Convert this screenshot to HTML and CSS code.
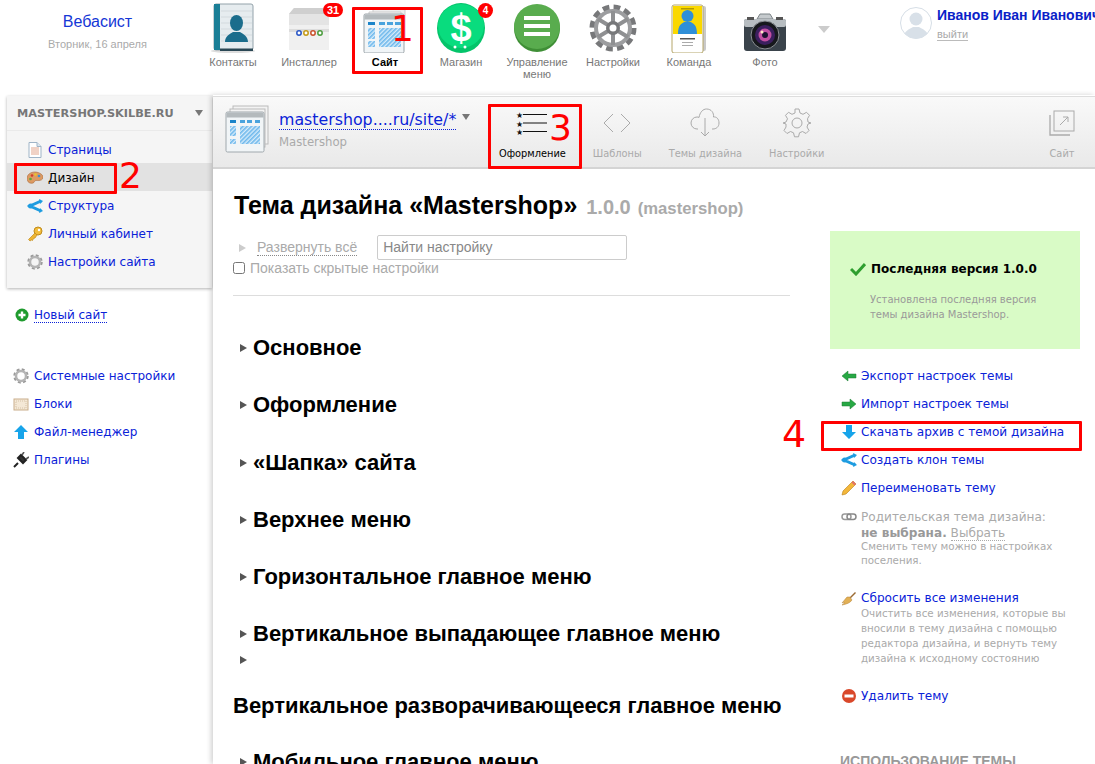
FILE: index.html
```html
<!DOCTYPE html>
<html lang="ru">
<head>
<meta charset="utf-8">
<title>Вебасист</title>
<link rel="stylesheet" href="styles.css">
</head>
<body>
<svg class="defs" width="0" height="0"><defs><pattern id="hatch" width="3" height="3" patternUnits="userSpaceOnUse" patternTransform="rotate(-45)"><rect width="3" height="3" fill="#d8ecfa"/><rect width="3" height="1.600" fill="#6db8ec"/></pattern></defs></svg>
<header class="top">
  <div class="brand">
    <a class="brand-name">Вебасист</a>
    <div class="brand-date">Вторник, 16 апреля</div>
  </div>
  <nav class="apps">
    <a class="app">
      <span class="app-icon"><svg width="46" height="50" viewBox="0 0 46 50"><ellipse cx="23" cy="48" rx="22" ry="2" fill="#ddd"/><rect x="4" y="1" width="39" height="46" rx="2" fill="#e6ecef" stroke="#93a2aa"/><rect x="4" y="1" width="6" height="46" fill="#1a7f97"/><path d="M10 45.500h33V48H10z" fill="#2a4754"/><g stroke="#d3dade"><path d="M11 8h31M11 14h31M11 20h31M11 26h31M11 32h31M11 38h31"/></g><ellipse cx="26.500" cy="20" rx="6.500" ry="8" fill="#1b6d8c"/><path d="M15 39c0-6 5-8 8-10h7c3 2 8 4 8 10z" fill="#1b6d8c"/></svg></span>
      <span class="app-label">Контакты</span>
    </a>
    <a class="app">
      <span class="app-icon"><svg width="46" height="50" viewBox="0 0 46 50"><path d="M8 5h32l3 6v36H3V11z" fill="#e4e4e4"/><path d="M3 11l5-6h32l3 6z" fill="#cfcfcf"/><path d="M3 22h40v25H3z" fill="#f0f0f0"/><path d="M3 26h40v3H3z" fill="#dcdcdc"/><circle cx="13" cy="30" r="2.200" fill="#fff" stroke="#2a56c6" stroke-width="1.500"/><circle cx="20" cy="30" r="2.200" fill="#fff" stroke="#c49a16" stroke-width="1.500"/><circle cx="27" cy="30" r="2.200" fill="#fff" stroke="#c9512c" stroke-width="1.500"/><circle cx="34" cy="30" r="2.200" fill="#fff" stroke="#4a9c3c" stroke-width="1.500"/></svg><b class="badge badge-wide">31</b></span>
      <span class="app-label">Инсталлер</span>
    </a>
    <a class="app app-active">
      <span class="app-icon"><svg width="48" height="50" viewBox="0 0 48 50"><path d="M12 6h32v32H12z" fill="#eee" stroke="#ccc"/><path d="M8 9h32v32H8z" fill="#f4f4f4" stroke="#ccc"/><rect x="3" y="11" width="40" height="39" rx="1.500" fill="#f1f5f7" stroke="#9aa3a8"/><rect x="3.500" y="11.500" width="39" height="5" fill="#b4babd"/><rect x="7" y="19" width="7" height="3" fill="#1b84c9"/><rect x="18" y="19" width="6" height="3" fill="#49a3dd"/><rect x="26" y="19" width="6" height="3" fill="#49a3dd"/><rect x="34" y="19" width="6" height="3" fill="#49a3dd"/><rect x="7" y="25" width="7" height="11" fill="url(#hatch)"/><rect x="7" y="38" width="7" height="6" fill="url(#hatch)"/><rect x="18" y="25" width="22" height="19" fill="url(#hatch)"/></svg></span>
      <span class="app-label">Сайт</span>
    </a>
    <a class="app">
      <span class="app-icon"><svg width="48" height="50" viewBox="0 0 48 50"><ellipse cx="24" cy="25" rx="24" ry="25" fill="#04c46a"/><ellipse cx="24" cy="23" rx="23" ry="22" fill="#09dc7e"/><text x="24" y="38" class="dollar" text-anchor="middle">$</text><circle cx="18" cy="44" r="1.500" fill="#fff"/><circle cx="28" cy="44" r="1.500" fill="#fff"/></svg><b class="badge">4</b></span>
      <span class="app-label">Магазин</span>
    </a>
    <a class="app app-two">
      <span class="app-icon"><svg width="46" height="50" viewBox="0 0 46 50"><ellipse cx="23" cy="25.500" rx="23" ry="23.500" fill="#3f8f36"/><ellipse cx="23" cy="23.500" rx="23" ry="22.500" fill="#59ac4e"/><path d="M10 13h26v4H10zM10 21h26v4H10zM10 29h26v4H10z" fill="#fff"/></svg></span>
      <span class="app-label">Управление меню</span>
    </a>
    <a class="app">
      <span class="app-icon"><svg width="48" height="50" viewBox="0 0 48 50"><circle cx="24" cy="25" r="20.500" fill="none" stroke="#77787a" stroke-width="6" stroke-dasharray="6.500 4.230"/><circle cx="24" cy="25" r="17" fill="none" stroke="#9c9d9f" stroke-width="4"/><g stroke="#8f9092" stroke-width="4"><path d="M24 8v34M9 16l30 18M39 16L9 34"/></g><circle cx="24" cy="25" r="7" fill="#77787a"/><circle cx="24" cy="25" r="3.500" fill="#fff"/></svg></span>
      <span class="app-label">Настройки</span>
    </a>
    <a class="app">
      <span class="app-icon"><svg width="44" height="50" viewBox="0 0 44 50"><rect x="8" y="3" width="31" height="45" rx="2" fill="#c9c9c9"/><rect x="5" y="2" width="31" height="48" rx="2" fill="#fff" stroke="#b5a66a"/><rect x="6" y="3" width="29" height="28" fill="#fad800"/><circle cx="20.500" cy="13" r="6" fill="#2f8fd8"/><path d="M11 31c0-10 4-10 6-12h7c2 2 6 2 6 12z" fill="#2f8fd8"/><rect x="14" y="5" width="13" height="1.500" fill="#b39a00"/><rect x="13" y="35" width="15" height="1.500" fill="#555"/><rect x="15" y="39" width="11" height="1" fill="#aaa"/><rect x="15" y="42" width="11" height="1" fill="#aaa"/></svg></span>
      <span class="app-label">Команда</span>
    </a>
    <a class="app">
      <span class="app-icon"><svg width="48" height="50" viewBox="0 0 48 50"><path d="M16 16l3-5h10l3 5z" fill="#c5cacd" stroke="#7d8488"/><rect x="3" y="16" width="42" height="32" rx="3" fill="#3a434b"/><rect x="3" y="16" width="42" height="8" rx="2" fill="#b7bdc1"/><rect x="6" y="14" width="7" height="3" fill="#555"/><rect x="35" y="14" width="7" height="3" fill="#555"/><circle cx="24" cy="32" r="14" fill="#16181c" stroke="#8b9094"/><circle cx="24" cy="32" r="10" fill="#3b1f5e"/><circle cx="24" cy="32" r="6.500" fill="#c24fa2"/><circle cx="24" cy="32" r="3" fill="#1c1230"/><circle cx="21" cy="29" r="1.500" fill="#ffe9c7"/></svg></span>
      <span class="app-label">Фото</span>
    </a>
  </nav>
  <span class="more-caret"></span>
  <div class="user">
    <svg class="avatar" width="32" height="32" viewBox="0 0 32 32"><defs><clipPath id="av"><circle cx="16" cy="16" r="15.500"/></clipPath></defs><circle cx="16" cy="16" r="15.500" fill="#fff" stroke="#d6dee6"/><g clip-path="url(#av)" fill="#d8e0e8"><circle cx="16" cy="12" r="6.500"/><path d="M3 32c1-9 7-10 10-12h6c3 2 9 3 10 12z"/></g></svg>
    <div class="user-text">
      <a class="user-name">Иванов Иван Иванович</a>
      <a class="user-exit">выйти</a>
    </div>
  </div>
</header>

<div class="page">
  <aside class="side">
    <div class="side-card">
      <div class="side-title"><span>MASTERSHOP.SKILBE.RU</span><i class="caret"></i></div>
      <ul class="side-list">
        <li class="side-row"><svg class="ico" width="16" height="16" viewBox="0 0 16 16"><path d="M2 .500h8l4 4v11H2z" fill="#fff" stroke="#9fb4c7"/><path d="M10 .500v4h4" fill="#dbe6ef" stroke="#9fb4c7"/><path d="M4 6h8M4 8h8M4 10h8M4 12h8" stroke="#e2a58c"/></svg><a>Страницы</a></li>
        <li class="side-row side-row-on"><svg class="ico" width="16" height="16" viewBox="0 0 16 16"><path d="M8 2C3 2 0 5 0 8.500S3 14 6 13c2-.7 1-2.500 3-2.500s6 .5 7-2.500S12 2 8 2z" fill="#dd9a62" stroke="#a86c3b" stroke-width=".6"/><circle cx="5" cy="5.500" r="1.300" fill="#d23c2c"/><circle cx="8.500" cy="4.500" r="1.300" fill="#e8c52c"/><circle cx="12" cy="6" r="1.300" fill="#3c8fd2"/><circle cx="3.500" cy="9" r="1.300" fill="#5aa83e"/></svg><a>Дизайн</a></li>
        <li class="side-row"><svg class="ico" width="16" height="16" viewBox="0 0 16 16"><path d="M14 3L3 8l11 5" fill="none" stroke="#1e9ce0" stroke-width="3"/><circle cx="3.500" cy="8" r="2.500" fill="#1e9ce0"/><path d="M12 1l4 2-3 3zM12 15l4-2-3-3z" fill="#1e9ce0"/></svg><a>Структура</a></li>
        <li class="side-row"><svg class="ico" width="16" height="16" viewBox="0 0 16 16"><circle cx="11" cy="5" r="4" fill="#f2bd3c" stroke="#c18b1c"/><circle cx="12" cy="4" r="1.200" fill="#fff"/><path d="M8 7L1.500 13.500l1.500 1.500 1.500-1 1 .5 1-2 1.500-.5L10 9z" fill="#eeb534" stroke="#c18b1c" stroke-width=".7"/></svg><a>Личный кабинет</a></li>
        <li class="side-row"><svg class="ico" width="16" height="16" viewBox="0 0 16 16"><circle cx="8" cy="8" r="6" fill="none" stroke="#9a9a9a" stroke-width="3.400" stroke-dasharray="2.600 2.110"/><circle cx="8" cy="8" r="5" fill="none" stroke="#b5b5b5" stroke-width="2.500"/></svg><a>Настройки сайта</a></li>
      </ul>
    </div>
    <div class="side-links side-new">
      <div class="side-link"><svg class="ico" width="14" height="14" viewBox="0 0 14 14"><circle cx="7" cy="7" r="6.500" fill="#1f9b2e"/><path d="M3.500 7h7M7 3.500v7" stroke="#fff" stroke-width="2.400"/></svg><a class="dotted">Новый сайт</a></div>
    </div>
    <div class="side-links">
      <div class="side-link"><svg class="ico" width="16" height="16" viewBox="0 0 16 16"><circle cx="8" cy="8" r="6" fill="none" stroke="#9a9a9a" stroke-width="3.400" stroke-dasharray="2.600 2.110"/><circle cx="8" cy="8" r="5" fill="none" stroke="#b5b5b5" stroke-width="2.500"/></svg><a>Системные настройки</a></div>
      <div class="side-link"><svg class="ico" width="16" height="16" viewBox="0 0 16 16"><rect x="1" y="3" width="14" height="11" fill="#f4e8d6" stroke="#c9ae8b"/><rect x="3" y="5" width="10" height="7" fill="none" stroke="#d6c3a8" stroke-dasharray="1 1"/></svg><a>Блоки</a></div>
      <div class="side-link"><svg class="ico" width="16" height="16" viewBox="0 0 16 16"><path d="M8 1l7 7h-4v7H5V8H1z" fill="#17a4ea"/></svg><a>Файл-менеджер</a></div>
      <div class="side-link"><svg class="ico" width="16" height="16" viewBox="0 0 16 16"><path d="M1 15l4-4M5 6l5 5 3-3-5-5z" stroke="#222" stroke-width="2" fill="#333"/><path d="M9 3l2-3M13 7l3-2" stroke="#555" stroke-width="1.600"/></svg><a>Плагины</a></div>
    </div>
  </aside>

  <main class="main">
    <div class="bar">
      <svg class="bar-site" width="44" height="48" viewBox="0 0 44 48"><rect x="8" y="1" width="35" height="38" fill="#f3f3f3" stroke="#bbb"/><rect x="5" y="4" width="35" height="38" fill="#f3f3f3" stroke="#bbb"/><rect x="1" y="7" width="38" height="40" rx="1.500" fill="#f1f5f7" stroke="#a0a8ad"/><rect x="1.500" y="7.500" width="37" height="5" fill="#b4babd"/><rect x="5" y="15" width="6" height="3" fill="#1b84c9"/><rect x="15" y="15" width="5" height="3" fill="#49a3dd"/><rect x="22" y="15" width="5" height="3" fill="#49a3dd"/><rect x="30" y="15" width="5" height="3" fill="#49a3dd"/><rect x="5" y="21" width="6" height="10" fill="url(#hatch)"/><rect x="5" y="34" width="6" height="5" fill="url(#hatch)"/><rect x="15" y="21" width="20" height="18" fill="url(#hatch)"/></svg>
      <div class="bar-title">
        <div class="bar-url"><a class="dotted">mastershop....ru/site/*</a><i class="caret"></i></div>
        <div class="bar-sub">Mastershop</div>
      </div>
      <a class="tab tab-on"><svg width="32" height="24" viewBox="0 0 32 24"><g fill="#111"><text x="0" y="7" class="star">★</text><text x="0" y="15.500" class="star">★</text><text x="0" y="23.500" class="star">★</text></g><path d="M7 3.500h24M7 12h24M7 20.500h24" stroke="#111"/></svg><span>Оформление</span></a>
      <a class="tab"><svg width="28" height="24" viewBox="0 0 28 24" fill="none" stroke="#aaa"><path d="M10 3L1 12l9 9M18 3l9 9-9 9"/></svg><span>Шаблоны</span></a>
      <a class="tab"><svg width="30" height="30" viewBox="0 0 30 30" fill="none" stroke="#aaa"><path d="M8 21H7a6 6 0 0 1 0-12c1 0 1 0 2 .5C10 4 13 1 16.500 1c5 0 7.500 4 7 8 3-.500 5.500 2 5.500 6s-3 6-6 6h-1"/><path d="M15 10v18M11 24l4 4 4-4"/></svg><span>Темы дизайна</span></a>
      <a class="tab"><svg width="30" height="30" viewBox="0 0 30 30" fill="none" stroke="#aaa"><circle cx="15" cy="15" r="5"/><path d="M13 1h4l1 4 3 1.300 3.500-2 3 3-2 3.500L26 14l3 1-3 1-1 3 2 3.500-3 3-3.500-2-3 1.300-1 4h-4l-1-4-3-1.300-3.500 2-3-3 2-3.500L4 16l-3-1 3-1 1.500-3.200-2-3.500 3-3 3.500 2L13 5z"/></svg><span>Настройки</span></a>
      <a class="tab tab-end"><svg width="26" height="26" viewBox="0 0 26 26" fill="none" stroke="#aaa"><rect x="5" y="1" width="20" height="20"/><path d="M1 5v20h20" stroke-width="1.300"/><path d="M11 15l8-8M14 7h5v5"/></svg><span>Сайт</span></a>
    </div>

    <div class="body">
      <h1 class="title">Тема дизайна «Mastershop» <span class="ver">1.0.0</span> <span class="slug">(mastershop)</span></h1>
      <div class="cols">
        <section class="settings">
          <div class="tools">
            <i class="arrow arrow-soft"></i>
            <a class="expand">Развернуть всё</a>
            <input class="find" type="text" placeholder="Найти настройку">
          </div>
          <label class="hidden-opt"><input type="checkbox"><span>Показать скрытые настройки</span></label>
          <hr class="rule">
          <div class="group"><i class="arrow"></i><h2>Основное</h2></div>
          <div class="group"><i class="arrow"></i><h2>Оформление</h2></div>
          <div class="group"><i class="arrow"></i><h2>«Шапка» сайта</h2></div>
          <div class="group"><i class="arrow"></i><h2>Верхнее меню</h2></div>
          <div class="group"><i class="arrow"></i><h2>Горизонтальное главное меню</h2></div>
          <div class="group"><i class="arrow"></i><h2>Вертикальное выпадающее главное меню</h2></div>
          <div class="group-wrap">
            <i class="arrow"></i>
            <h2>Вертикальное разворачивающееся главное меню</h2>
          </div>
          <div class="group group-last"><i class="arrow"></i><h2>Мобильное главное меню</h2></div>
        </section>

        <aside class="rail">
          <div class="notice">
            <div class="notice-head"><svg width="16" height="14" viewBox="0 0 16 14"><path d="M1 7l5 5L15 2" fill="none" stroke="#2f9e2f" stroke-width="3"/></svg><strong>Последняя версия 1.0.0</strong></div>
            <p>Установлена последняя версия темы дизайна Mastershop.</p>
          </div>
          <ul class="actions">
            <li class="act"><svg class="ico" width="16" height="16" viewBox="0 0 16 16"><path d="M1 8l6-5v3h8v4H7v3z" fill="#27a844" stroke="#1d7a32" stroke-width=".5"/></svg><a>Экспорт настроек темы</a></li>
            <li class="act"><svg class="ico" width="16" height="16" viewBox="0 0 16 16"><path d="M15 8L9 3v3H1v4h8v3z" fill="#27a844" stroke="#1d7a32" stroke-width=".5"/></svg><a>Импорт настроек темы</a></li>
            <li class="act"><svg class="ico" width="16" height="16" viewBox="0 0 16 16"><path d="M8 15l7-7h-4V1H5v7H1z" fill="#17a4ea"/></svg><a>Скачать архив с темой дизайна</a></li>
            <li class="act"><svg class="ico" width="16" height="16" viewBox="0 0 16 16"><path d="M14 3L3 8l11 5" fill="none" stroke="#1e9ce0" stroke-width="3"/><circle cx="3.500" cy="8" r="2.500" fill="#1e9ce0"/><path d="M12 1l4 2-3 3zM12 15l4-2-3-3z" fill="#1e9ce0"/></svg><a>Создать клон темы</a></li>
            <li class="act"><svg class="ico" width="16" height="16" viewBox="0 0 16 16"><path d="M12 1l3 3L5 14l-4 1 1-4z" fill="#f3b73a" stroke="#b97f1a" stroke-width=".6"/><path d="M12 1l3 3-1.500 1.500-3-3z" fill="#e2726a"/></svg><a>Переименовать тему</a></li>
            <li class="act act-parent"><svg class="ico" width="16" height="16" viewBox="0 0 16 16"><rect x="1" y="5" width="9" height="5.500" rx="2.700" fill="none" stroke="#999" stroke-width="1.500"/><rect x="6" y="5" width="9" height="5.500" rx="2.700" fill="none" stroke="#888" stroke-width="1.500"/></svg>
              <div class="act-body">
                <div class="parent-line">Родительская тема дизайна:</div>
                <div class="parent-line"><b>не выбрана.</b> <a class="pick">Выбрать</a></div>
                <p class="hint">Сменить тему можно в настройках поселения.</p>
              </div>
            </li>
            <li class="act act-reset"><svg class="ico" width="16" height="16" viewBox="0 0 16 16"><path d="M8 7l6-6 1 1-6 6z" fill="#9a6a33"/><path d="M9 6l2 3c-2 3-5 4-10 5 2-1 2-2 2-3l-2 1c2-2 3-4 5-6z" fill="#e2b055" stroke="#b5823a" stroke-width=".5"/></svg>
              <div class="act-body">
                <a>Сбросить все изменения</a>
                <p class="hint hint-reset">Очистить все изменения, которые вы вносили в тему дизайна с помощью редактора дизайна, и вернуть тему дизайна к исходному состоянию</p>
              </div>
            </li>
            <li class="act"><svg class="ico" width="16" height="16" viewBox="0 0 16 16"><circle cx="8" cy="8" r="7" fill="#d9482a"/><rect x="3.500" y="6.500" width="9" height="3" fill="#fff"/></svg><a>Удалить тему</a></li>
          </ul>
          <h3 class="rail-head">ИСПОЛЬЗОВАНИЕ ТЕМЫ</h3>
        </aside>
      </div>
    </div>
  </main>
</div>

<div class="mark mark-1"></div><span class="num num-1">1</span>
<div class="mark mark-2"></div><span class="num num-2">2</span>
<div class="mark mark-3"></div><span class="num num-3">3</span>
<div class="mark mark-4"></div><span class="num num-4">4</span>
</body>
</html>
```

FILE: styles.css
```css
* { box-sizing: border-box; }
html, body { height: 764px; overflow: hidden; }
body { margin: 0; background: #fff; font-family: "DejaVu Sans", sans-serif; font-size: 12px; color: #000; position: relative; }
a { color: #0a22d8; }
ul { list-style: none; margin: 0; padding: 0; }
p { margin: 0; }
.defs { position: absolute; }
.dotted { border-bottom: 1px dotted #0a22d8; }
.ico { flex: none; }

.top { height: 95px; display: flex; align-items: flex-start; font-family: "Liberation Sans", sans-serif; }
.brand { width: 195px; flex: none; text-align: center; padding-top: 12px; }
.brand-name { font-size: 16px; line-height: 19px; display: block; color: #1437d6; }
.brand-date { font-size: 11px; line-height: 13px; margin-top: 7px; color: #aaa; }
.apps { display: flex; flex: none; }
.app { width: 76px; display: flex; flex-direction: column; align-items: center; padding-top: 3px; font-size: 11px; line-height: 12px; color: #777; text-align: center; }
.app-icon { position: relative; height: 50px; display: block; margin-bottom: 3px; }
.app-icon svg { display: block; }
.app-label { display: block; padding: 0 4px; }
.app-active .app-label { color: #000; font-weight: bold; }
.badge { position: absolute; right: -8px; top: 0; width: 15px; height: 15px; border-radius: 50%; background: #f00; color: #fff; font-size: 10px; line-height: 15px; text-align: center; }
.badge-wide { width: 20px; right: -11px; border-radius: 7px; height: 14px; line-height: 14px; font-size: 11px; }
.dollar { font: bold 38px "Liberation Sans", sans-serif; fill: #fff; }
.more-caret { flex: none; margin: 26px 0 0 15px; border: 6px solid transparent; border-top: 7px solid #ccc; border-bottom: 0; }
.user { margin-left: 70px; padding-top: 7px; display: flex; flex: none; white-space: nowrap; }
.user-text { margin-left: 5px; }
.user-name { display: block; font-size: 14px; line-height: 16px; font-weight: bold; color: #0a22c8; }
.user-exit { display: inline-block; font-size: 11px; line-height: 12px; margin-top: 5px; color: #aaa; border-bottom: 1px solid #bbb; }

.page { display: flex; align-items: stretch; height: 669px; }
.side { width: 213px; flex: none; padding: 1px 0 0 7px; }
.side-card { width: 205px; height: 192px; background: #f5f5f5; box-shadow: 0 1px 3px rgba(0,0,0,.3); }
.side-title { height: 35px; border-bottom: 1px solid #eaeaea; padding: 0 9px 0 10px; display: flex; align-items: center; justify-content: space-between; font-weight: bold; font-size: 11.3px; color: #777; }
.caret { display: block; border: 4px solid transparent; border-top: 6px solid #777; border-bottom: 0; }
.side-list { padding-top: 4px; }
.side-row { height: 28px; display: flex; align-items: center; gap: 5px; padding: 2px 0 0 20px; }
.side-row-on { background: #e2e2e2; }
.side-row-on a { color: #000; }
.side-links { padding-left: 6px; }
.side-new { margin: 13px 0 33px; padding-left: 8px; }
.side-link { height: 28px; display: flex; align-items: center; gap: 5px; }

.main { flex: 1; min-width: 0; padding-top: 1px; box-shadow: -2px 0 5px rgba(0,0,0,.18); background: #fff; }
.bar { height: 73px; display: flex; align-items: flex-start; background: linear-gradient(#f9f9f9, #e9e9e9); border-top: 1px solid #ddd; border-bottom: 2px solid #d4d4d4; padding-left: 12px; }
.bar-site { margin-top: 8px; flex: none; }
.bar-title { margin: 13px 0 0 10px; width: 209px; flex: none; }
.bar-url { display: flex; gap: 6px; font-size: 15.8px; line-height: 19px; }
.bar-url .caret { margin-top: 4px; }
.bar-sub { margin-top: 5px; font-size: 11.7px; color: #aaa; }
.tab { display: flex; flex-direction: column; align-items: center; height: 70px; padding: 0 13.500px; font-size: 9.800px; color: #aaa; white-space: nowrap; }
.tab svg { height: 30px; margin-top: 11px; }
.tab span { margin-top: auto; padding-bottom: 8px; }
.tab-on { color: #000; padding: 0 13.500px 0 11px; }
.tab-end { margin-left: auto; padding-right: 20px; }
.star { font-size: 8px; }

.body { padding: 20px 15px 0 20px; font-family: "Liberation Sans", sans-serif; }
.title { margin: 0; font-size: 25px; line-height: 32px; font-weight: bold; padding-left: 1px; white-space: nowrap; }
.ver { color: #aaa; font-size: 20px; margin-left: 2px; }
.slug { color: #aaa; font-size: 16.700px; }
.cols { display: flex; margin-top: 6px; gap: 40px; }
.settings { width: 557px; flex: none; }
.tools { display: flex; align-items: center; height: 25px; margin-top: 4px; font-size: 14px; color: #aaa; }
.arrow { display: block; flex: none; border: 4px solid transparent; border-left: 7px solid #555; border-right: 0; }
.arrow-soft { border-left-color: #ccc; margin-left: 6px; }
.expand { margin-left: 11px; color: #aaa; border-bottom: 1px dotted #888; }
.find { width: 250px; height: 25px; margin-left: 20px; padding: 0 5px 2px; font: 14px "Liberation Sans", sans-serif; border: 1px solid #ccc; border-radius: 2px; }
.find::placeholder { color: #888; }
.hidden-opt { display: flex; align-items: center; height: 16px; font-size: 14px; color: #aaa; }
.hidden-opt input { margin: 0 5px 0 0; width: 12px; height: 12px; }
.rule { border: 0; border-top: 1px solid #ddd; margin: 19px 0 37px; }
.group { display: flex; align-items: center; gap: 6px; padding-left: 7px; height: 30px; margin-bottom: 27.300px; }
.group h2, .group-wrap h2 { margin: 0; font-size: 22px; line-height: 24px; font-weight: bold; white-space: nowrap; }
.group-wrap { margin-top: -21px; }
.group-wrap .arrow { margin-left: 7px; }
.group-wrap h2 { margin-top: 30px; }
.group-last { margin-top: 29px; }

.rail { width: 250px; flex: none; }
.notice { height: 118px; background: #d9fbc6; padding: 31px 20px 0 20px; }
.notice-head { display: flex; align-items: center; gap: 5px; font-family: "DejaVu Sans", sans-serif; }
.notice-head strong { font-size: 12px; }
.notice p { margin: 16px 0 0 20px; font: 10px/15px "DejaVu Sans", sans-serif; color: #999; }
.actions { padding: 13px 0 0 11px; font-family: "DejaVu Sans", sans-serif; font-size: 12.100px; }
.act { display: flex; min-height: 28px; align-items: center; gap: 4px; }
.act-parent, .act-reset { align-items: flex-start; padding-top: 7px; }
.act-parent { color: #aaa; height: 82px; }
.act-reset { height: 98px; }
.act-body { line-height: 15px; }
.parent-line { line-height: 16px; white-space: nowrap; }
.parent-line b { color: #999; }
.pick { color: #aaa; border-bottom: 1px dotted #aaa; }
.hint { font-size: 10.300px; line-height: 14px; color: #aaa; margin-top: -2px; }
.hint-reset { line-height: 15px; margin-top: 0; }
.rail-head { margin: 43px 0 0 10px; font-size: 14px; line-height: 16px; color: #999; font-family: "Liberation Sans", sans-serif; }

.mark { position: absolute; border: 3px solid #f00; border-radius: 1px; }
.mark-1 { left: 352px; top: 7px; width: 71px; height: 67px; }
.mark-2 { left: 14px; top: 163px; width: 103px; height: 31px; }
.mark-3 { left: 488px; top: 104px; width: 94px; height: 65px; }
.mark-4 { left: 821px; top: 421px; width: 261px; height: 30px; }
.num { position: absolute; color: #f00; font-family: "DejaVu Sans", sans-serif; line-height: 1; }
.num-1 { left: 391px; top: 11px; font-size: 36px; }
.num-2 { left: 119px; top: 158px; font-size: 36px; }
.num-3 { left: 549px; top: 110px; font-size: 36px; }
.num-4 { left: 782px; top: 415px; font-size: 38px; }
```
